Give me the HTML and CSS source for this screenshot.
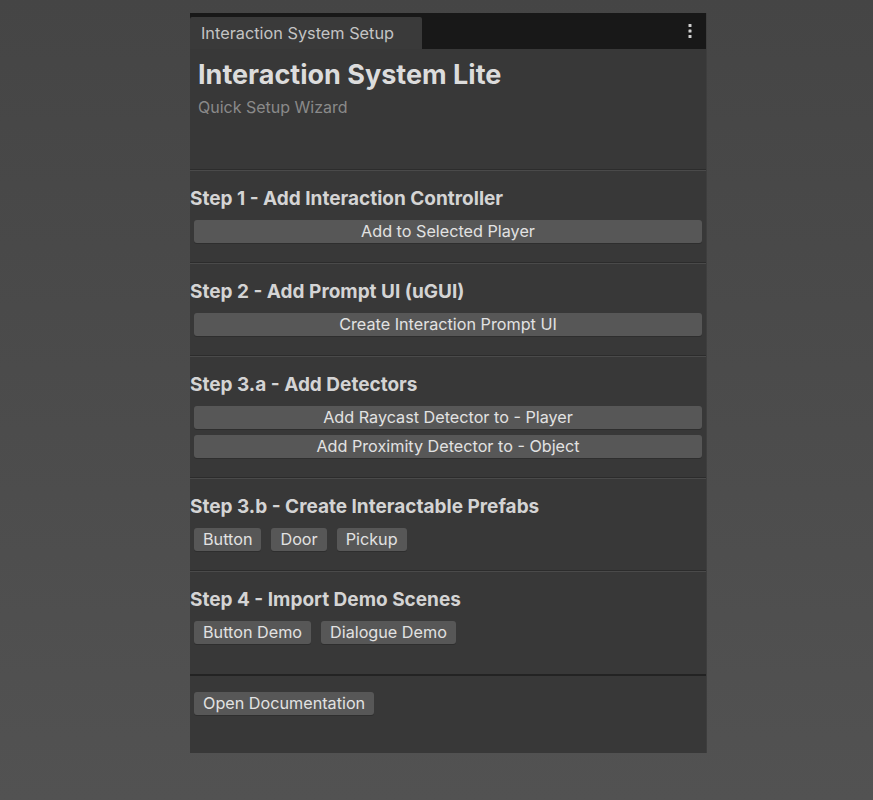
FILE: index.html
```html
<!DOCTYPE html>
<html>
<head>
<meta charset="utf-8">
<link rel="stylesheet" href="styles.css">
</head>
<body>
<div class="stage">
  <div class="window">
    <div class="tabbar">
      <div class="tab">Interaction System Setup</div>
      <div class="menu">
        <svg width="4" height="16" viewBox="0 0 4 16"><rect x="0.5" y="1" width="3" height="3" rx="0.6" fill="#d0d0d0"/><rect x="0.5" y="6.5" width="3" height="3" rx="0.6" fill="#d0d0d0"/><rect x="0.5" y="12" width="3" height="3" rx="0.6" fill="#d0d0d0"/></svg>
      </div>
    </div>
    <div class="header">
      <div class="title">Interaction System Lite</div>
      <div class="subtitle">Quick Setup Wizard</div>
    </div>
    <div class="section">
      <div class="heading">Step 1 - Add Interaction Controller</div>
      <div class="stack">
        <div class="btn wide">Add to Selected Player</div>
      </div>
    </div>
    <div class="section">
      <div class="heading">Step 2 - Add Prompt UI (uGUI)</div>
      <div class="stack">
        <div class="btn wide">Create Interaction Prompt UI</div>
      </div>
    </div>
    <div class="section">
      <div class="heading">Step 3.a - Add Detectors</div>
      <div class="stack">
        <div class="btn wide">Add Raycast Detector to - Player</div>
        <div class="btn wide">Add Proximity Detector to - Object</div>
      </div>
    </div>
    <div class="section">
      <div class="heading">Step 3.b - Create Interactable Prefabs</div>
      <div class="row">
        <div class="btn">Button</div>
        <div class="btn">Door</div>
        <div class="btn">Pickup</div>
      </div>
    </div>
    <div class="section extra">
      <div class="heading">Step 4 - Import Demo Scenes</div>
      <div class="row">
        <div class="btn">Button Demo</div>
        <div class="btn">Dialogue Demo</div>
      </div>
    </div>
    <div class="footer">
      <div class="row">
        <div class="btn">Open Documentation</div>
      </div>
    </div>
  </div>
</div>
</body>
</html>
```

FILE: styles.css
```css
html, body {
  margin: 0;
  padding: 0;
}
body {
  background: linear-gradient(#454545, #525252);
  min-height: 800px;
  font-family: Inter, "Noto Sans", sans-serif;
}
.stage {
  padding: 13px 0 0 190px;
}
.window {
  width: 516px;
  background: #383838;
  box-shadow: 1px 0 0 #3e3e3e;
}
.tabbar {
  height: 36px;
  background: #181818;
  display: flex;
  align-items: flex-end;
  justify-content: space-between;
}
.tab {
  width: 232px;
  height: 32px;
  box-sizing: border-box;
  background: #3a3a3a;
  border-radius: 2px 2px 0 0;
  color: #c4c4c4;
  font-size: 16.3px;
  line-height: 33px;
  padding-left: 11px;
}
.menu {
  align-self: center;
  width: 4px;
  height: 16px;
  margin-right: 14px;
  display: flex;
}
.header {
  height: 120px;
  box-sizing: border-box;
  padding: 10px 8px 0;
}
.title {
  font-size: 27px;
  font-weight: 700;
  color: #dcdcdc;
  line-height: 32px;
}
.subtitle {
  font-size: 16px;
  color: #8a8a8a;
  line-height: 20px;
  margin-top: 6px;
}
.section {
  border-top: 1px solid #2c2c2c;
  box-shadow: inset 0 1px 0 #4a4a4a;
  padding: 17px 0 19px;
}
.section.extra {
  padding-bottom: 30px;
}
.heading {
  font-size: 19px;
  font-weight: 700;
  color: #d4d4d4;
  line-height: 24px;
  margin-bottom: 9px;
}
.stack {
  display: flex;
  flex-direction: column;
  gap: 6px;
  padding: 0 4px;
}
.row {
  display: flex;
  gap: 10px;
  padding: 0 4px;
}
.btn {
  height: 23px;
  box-sizing: border-box;
  background: #575757;
  border-radius: 3px;
  box-shadow: 0 1px 0 #2e2e2e;
  color: #e2e2e2;
  font-size: 16.2px;
  line-height: 23px;
  padding: 0 9px;
  white-space: nowrap;
}
.btn.wide {
  text-align: center;
}
.footer {
  border-top: 2px solid #232323;
  height: 79px;
  box-sizing: border-box;
  padding-top: 16px;
}
```
